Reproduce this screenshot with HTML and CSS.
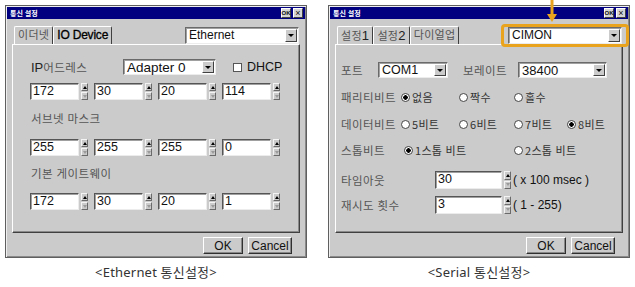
FILE: index.html
```html
<!DOCTYPE html>
<html lang="ko">
<head>
  <meta charset="UTF-8">
  <title>통신 설정</title>
  <link rel="stylesheet" href="styles.css">
</head>
<body>
  <div class="page">
    <figure class="shot">
      <div class="window">
        <div class="titlebar">
          <span class="title">통신 설정</span>
          <span class="tb-btn">OK</span>
          <span class="tb-btn x">×</span>
        </div>
        <div class="client">
          <div class="tabrow">
            <div class="tabs">
              <span class="tab ko">이더넷</span>
              <span class="tab strong">IO Device</span>
            </div>
            <span class="combo top"><span>Ethernet</span><span class="drop"></span></span>
          </div>
          <div class="panel eth">
            <div class="ip-row">
              <span class="label ip"><span class="latin">IP</span>어드레스</span>
              <span class="combo adapter"><span>Adapter 0</span><span class="drop"></span></span>
              <span class="check"><i></i>DHCP</span>
            </div>
            <div class="spins">
              <span class="spin"><span class="field">172</span><span class="arrows"><i class="up"></i><i class="down"></i></span></span>
              <span class="spin"><span class="field">30</span><span class="arrows"><i class="up"></i><i class="down"></i></span></span>
              <span class="spin"><span class="field">20</span><span class="arrows"><i class="up"></i><i class="down"></i></span></span>
              <span class="spin"><span class="field">114</span><span class="arrows"><i class="up"></i><i class="down"></i></span></span>
            </div>
            <div class="label line sub">서브넷 마스크</div>
            <div class="spins s2">
              <span class="spin"><span class="field">255</span><span class="arrows"><i class="up"></i><i class="down"></i></span></span>
              <span class="spin"><span class="field">255</span><span class="arrows"><i class="up"></i><i class="down"></i></span></span>
              <span class="spin"><span class="field">255</span><span class="arrows"><i class="up"></i><i class="down"></i></span></span>
              <span class="spin"><span class="field">0</span><span class="arrows"><i class="up"></i><i class="down"></i></span></span>
            </div>
            <div class="label line gw">기본 게이트웨이</div>
            <div class="spins s3">
              <span class="spin"><span class="field">172</span><span class="arrows"><i class="up"></i><i class="down"></i></span></span>
              <span class="spin"><span class="field">30</span><span class="arrows"><i class="up"></i><i class="down"></i></span></span>
              <span class="spin"><span class="field">20</span><span class="arrows"><i class="up"></i><i class="down"></i></span></span>
              <span class="spin"><span class="field">1</span><span class="arrows"><i class="up"></i><i class="down"></i></span></span>
            </div>
          </div>
          <div class="actions">
            <span class="btn ok">OK</span>
            <span class="btn cancel">Cancel</span>
          </div>
        </div>
      </div>
      <figcaption>&lt;Ethernet 통신설정&gt;</figcaption>
    </figure>

    <figure class="shot">
      <div class="window">
        <div class="titlebar">
          <span class="title">통신 설정</span>
          <span class="tb-btn">OK</span>
          <span class="tb-btn x">×</span>
        </div>
        <div class="client">
          <div class="tabrow">
            <div class="tabs">
              <span class="tab ko">설정<b>1</b></span>
              <span class="tab ko">설정<b>2</b></span>
              <span class="tab ko">다이얼업</span>
            </div>
            <span class="combo top mark">
              <span>CIMON</span><span class="drop"></span>
              <svg class="arrow" width="12" height="24" viewBox="0 0 12 24">
                <rect x="4.5" y="0" width="3" height="16" fill="#e9a31c"/>
                <polygon points="1,14 11,14 6,22" fill="#e9a31c"/>
              </svg>
            </span>
          </div>
          <div class="panel serial">
            <div class="port-row">
              <span class="label w37">포트</span>
              <span class="combo com"><span>COM1</span><span class="drop"></span></span>
              <span class="label baud">보레이트</span>
              <span class="combo rate"><span>38400</span><span class="drop"></span></span>
            </div>
            <div class="opt-row parity">
              <span class="label">패리티비트</span>
              <span class="radio on"><i></i>없음</span>
              <span class="radio"><i></i>짝수</span>
              <span class="radio"><i></i>홀수</span>
            </div>
            <div class="opt-row data">
              <span class="label">데이터비트</span>
              <span class="radio"><i></i>5비트</span>
              <span class="radio"><i></i>6비트</span>
              <span class="radio"><i></i>7비트</span>
              <span class="radio on"><i></i>8비트</span>
            </div>
            <div class="opt-row stop">
              <span class="label">스톱비트</span>
              <span class="radio on shift"><i></i>1스톱 비트</span>
              <span class="radio col4"><i></i>2스톱 비트</span>
            </div>
            <div class="num-row timeout">
              <span class="label w94">타임아웃</span>
              <span class="spin"><span class="field wide">30</span><span class="arrows"><i class="up"></i><i class="down"></i></span></span>
              <span class="unit">( x 100 msec )</span>
            </div>
            <div class="num-row retry">
              <span class="label w94">재시도 횟수</span>
              <span class="spin"><span class="field wide">3</span><span class="arrows"><i class="up"></i><i class="down"></i></span></span>
              <span class="unit">( 1 - 255)</span>
            </div>
          </div>
          <div class="actions">
            <span class="btn ok">OK</span>
            <span class="btn cancel">Cancel</span>
          </div>
        </div>
      </div>
      <figcaption>&lt;Serial 통신설정&gt;</figcaption>
    </figure>
  </div>
</body>
</html>
```

FILE: styles.css
```css
* {
  box-sizing: border-box;
}
body {
  margin: 0;
  background: #fff;
  font-family: "Liberation Sans", "Noto Sans CJK KR", sans-serif;
  font-size: 11.5px;
  color: #111;
}
.page {
  display: flex;
  gap: 21px;
  padding: 5px 0 0 5px;
}
.shot {
  margin: 0;
  width: 302px;
  display: flex;
  flex-direction: column;
  align-items: center;
}
figcaption {
  margin-top: 6px;
  line-height: 16px;
  font-family: "Noto Sans", "Noto Sans CJK KR", sans-serif;
  font-size: 13px;
  color: #333;
  letter-spacing: 0.2px;
}

/* window frame */
.window {
  width: 302px;
  height: 253px;
  border: 1px solid #5f5f5f;
  padding: 1px;
  background: #cbcbcb;
  box-shadow: inset 1px 1px #efefef, inset -1px -1px #8a8a8a;
  display: flex;
  flex-direction: column;
}
.titlebar {
  height: 12px;
  background: #000080;
  display: flex;
  align-items: center;
  gap: 2px;
  padding: 0 2px 0 3px;
}
.title {
  flex: 1;
  color: #fff;
  font: bold 7px "Noto Sans CJK KR", sans-serif;
}
.tb-btn {
  width: 10px;
  height: 10px;
  background: #d4d4d4;
  border: 1px solid;
  border-color: #fff #404040 #404040 #fff;
  font: bold 6px "Liberation Sans", sans-serif;
  display: flex;
  align-items: center;
  justify-content: center;
}
.tb-btn.x {
  font-size: 9px;
  font-weight: normal;
}
.client {
  flex: 1;
  padding: 7px 5px 0;
  display: flex;
  flex-direction: column;
}

/* tabs */
.tabrow {
  height: 18px;
  display: flex;
  justify-content: space-between;
  align-items: flex-start;
}
.tabs {
  display: flex;
  padding-left: 2px;
}
.tab {
  height: 18px;
  padding: 0 3px;
  border: 1px solid;
  border-bottom: 0;
  border-color: #fff #404040 #404040 #fff;
  border-radius: 2px 2px 0 0;
  line-height: 17px;
  font-size: 11.5px;
  color: #000;
}
.tab.strong {
  font-size: 12px;
  letter-spacing: -0.2px;
  -webkit-text-stroke: 0.3px #000;
}
.tab.ko {
  font-size: 11px;
  color: #555;
  letter-spacing: 0.3px;
}
.tab b {
  font-family: "Liberation Sans", sans-serif;
  font-weight: normal;
  font-size: 13px;
  color: #222;
}
.panel {
  height: 189px;
  border: 1px solid;
  border-color: #fff #404040 #404040 #fff;
  box-shadow: inset -1px -1px #8a8a8a;
}

/* controls */
.combo {
  height: 16px;
  display: flex;
  justify-content: space-between;
  background: #fff;
  border: 1px solid;
  border-color: #6a6a6a #ececec #ececec #6a6a6a;
  box-shadow: inset 1px 1px #a0a0a0;
  padding: 1px 1px 1px 3px;
  line-height: 13px;
  font-size: 12px;
}
.combo.top {
  width: 114px;
  height: 17px;
  margin: 1px 1px 0 0;
}
.drop {
  width: 12px;
  background: #cbcbcb;
  border: 1px solid;
  border-color: #fff #404040 #404040 #fff;
  display: flex;
  align-items: center;
  justify-content: center;
}
.drop::after {
  content: "";
  border: 3px solid transparent;
  border-top: 3px solid #000;
  border-bottom: 0;
}
.label {
  color: #555;
  font-size: 11.5px;
  font-family: "Noto Sans CJK KR", sans-serif;
  line-height: 16px;
  letter-spacing: 0.4px;
}
.latin {
  font-family: "Liberation Sans", sans-serif;
  font-size: 13px;
  color: #222;
  letter-spacing: 0;
}
.spin {
  display: flex;
  gap: 2px;
  height: 17px;
}
.field {
  width: 49px;
  background: #fff;
  border: 1px solid;
  border-color: #555 #ececec #ececec #555;
  box-shadow: inset 1px 1px #a0a0a0;
  padding-left: 2px;
  line-height: 15px;
  font-size: 12.5px;
}
.field.wide {
  width: 67px;
}
.arrows {
  width: 7px;
  display: flex;
  flex-direction: column;
  gap: 1px;
}
.arrows i {
  flex: 1;
  background: #cbcbcb;
  border: 1px solid;
  border-color: #f4f4f4 #6a6a6a #6a6a6a #f4f4f4;
  display: flex;
  align-items: center;
  justify-content: center;
}
.arrows .up::after {
  content: "";
  border: 2px solid transparent;
  border-bottom: 3px solid #000;
  border-top: 0;
}
.arrows .down::after {
  content: "";
  border: 2px solid transparent;
  border-top: 3px solid #9a9a9a;
  border-bottom: 0;
}
.check {
  display: flex;
  align-items: center;
  gap: 5px;
  margin-left: 17px;
  font-size: 12.5px;
}
.check i {
  width: 9px;
  height: 9px;
  background: #fff;
  border: 1px solid #555;
}
.radio {
  display: flex;
  align-items: center;
  gap: 2px;
  font-family: "Noto Sans CJK KR", sans-serif;
  font-size: 11px;
  color: #333;
  letter-spacing: 0.3px;
}
.radio i {
  width: 9px;
  height: 9px;
  border-radius: 50%;
  border: 1px solid #444;
  background: #fff;
}
.radio.on i {
  background: radial-gradient(circle, #000 2px, #fff 2.5px);
}
.btn {
  height: 17px;
  display: flex;
  align-items: center;
  justify-content: center;
  background: #cbcbcb;
  border: 1px solid;
  border-color: #fff #303030 #303030 #fff;
  box-shadow: inset -1px -1px #888;
  font-size: 12px;
}
.btn.ok {
  width: 40px;
}
.btn.cancel {
  width: 44px;
}
.actions {
  display: flex;
  justify-content: flex-end;
  gap: 5px;
  margin-top: 4px;
  padding-right: 8px;
}

/* ethernet panel */
.eth {
  padding: 14px 0 0 17px;
}
.ip-row {
  display: flex;
  align-items: center;
  height: 16px;
}
.label.ip {
  width: 93px;
  padding-left: 1px;
}
.combo.adapter {
  width: 93px;
  font-size: 13.5px;
}
.spins {
  display: flex;
  gap: 6px;
  margin-top: 8px;
}
.spins.s2 {
  margin-top: 13px;
}
.spins.s3 {
  margin-top: 12px;
}
.label.line {
  height: 16px;
  padding-left: 1px;
}
.label.sub {
  margin-top: 10px;
}
.label.gw {
  margin-top: 9px;
}

/* serial panel */
.serial {
  padding: 17px 0 0 5px;
}
.port-row {
  display: flex;
  align-items: center;
  height: 16px;
}
.label.w37 {
  width: 37px;
}
.combo.com {
  width: 70px;
  font-size: 12.5px;
}
.label.baud {
  width: 55px;
  margin-left: 15px;
}
.combo.rate {
  width: 89px;
  font-size: 13px;
}
.opt-row {
  display: grid;
  grid-template-columns: 60px 58px 55px 53px auto;
  align-items: center;
  height: 16px;
  margin-top: 11px;
}
.opt-row.stop {
  margin-top: 10px;
}
.radio.shift {
  padding-left: 3px;
  grid-column: 2 / span 2;
}
.radio.col4 {
  grid-column: 4 / span 2;
}
.num-row {
  display: flex;
  align-items: center;
  height: 18px;
  margin-top: 13px;
}
.num-row.retry {
  margin-top: 7px;
}
.num-row .spin {
  height: 18px;
}
.label.w94 {
  width: 94px;
}
.unit {
  margin-left: 2px;
  font-size: 12px;
}

/* orange annotation over the protocol combo */
.mark {
  position: relative;
}
.mark::before {
  content: "";
  position: absolute;
  inset: -4px -8px;
  border: 3px solid #e9a31c;
  border-radius: 4px;
}
.arrow {
  position: absolute;
  left: 37px;
  top: -28px;
}
```
